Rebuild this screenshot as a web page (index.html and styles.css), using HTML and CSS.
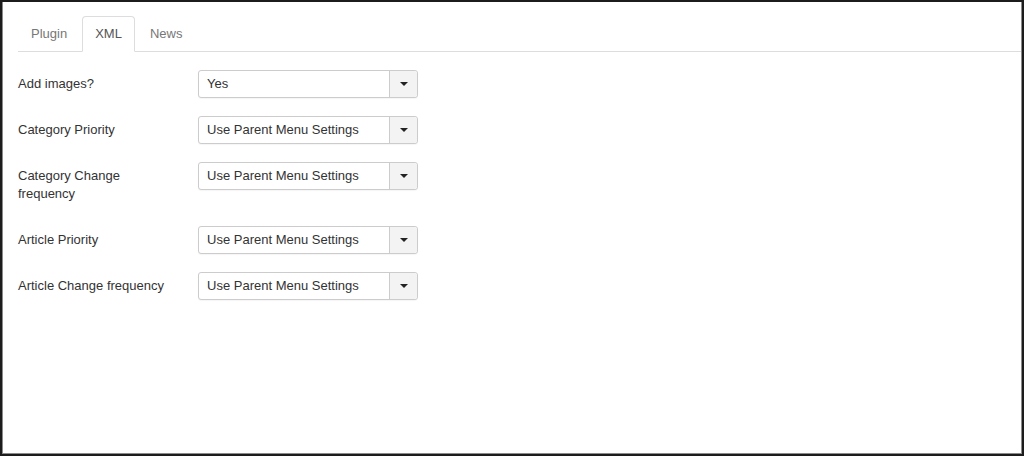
FILE: index.html
```html
<!DOCTYPE html>
<html>
<head>
<meta charset="utf-8">
<link rel="stylesheet" href="styles.css">
</head>
<body>
<div class="frame">
  <ul class="tabs">
    <li class="tab">Plugin</li>
    <li class="tab active">XML</li>
    <li class="tab">News</li>
  </ul>
  <div class="form">
    <div class="row">
      <div class="label">Add images?</div>
      <div class="select"><span class="value">Yes</span><span class="arrow"><i></i></span></div>
    </div>
    <div class="row">
      <div class="label">Category Priority</div>
      <div class="select"><span class="value">Use Parent Menu Settings</span><span class="arrow"><i></i></span></div>
    </div>
    <div class="row">
      <div class="label">Category Change frequency</div>
      <div class="select"><span class="value">Use Parent Menu Settings</span><span class="arrow"><i></i></span></div>
    </div>
    <div class="row">
      <div class="label">Article Priority</div>
      <div class="select"><span class="value">Use Parent Menu Settings</span><span class="arrow"><i></i></span></div>
    </div>
    <div class="row">
      <div class="label">Article Change frequency</div>
      <div class="select"><span class="value">Use Parent Menu Settings</span><span class="arrow"><i></i></span></div>
    </div>
  </div>
</div>
</body>
</html>
```

FILE: styles.css
```css
html, body {
  margin: 0;
  padding: 0;
  background: #ffffff;
}
.frame {
  box-sizing: border-box;
  width: 1024px;
  height: 456px;
  border: 2px solid #1c1c1c;
  box-shadow: inset 1px 0 0 #8a8a8a, inset -1px 0 0 #8a8a8a, inset 0 -1px 0 #8a8a8a;
  padding: 14px 1px 0 16px;
  font-family: "Liberation Sans", Arial, sans-serif;
  font-size: 13px;
  color: #333333;
}
.tabs {
  list-style: none;
  margin: 0;
  padding: 0;
  display: flex;
  border-bottom: 1px solid #dddddd;
}
.tab {
  padding: 8px 12px;
  line-height: 18px;
  margin-right: 2px;
  margin-bottom: -1px;
  border: 1px solid transparent;
  border-radius: 4px 4px 0 0;
  color: #777777;
}
.tab.active {
  color: #555555;
  background: #ffffff;
  border-color: #dddddd #dddddd transparent;
}
.form {
  margin-top: 18px;
  display: flex;
  flex-direction: column;
  gap: 18px;
}
.row {
  display: flex;
  align-items: flex-start;
}
.label {
  width: 160px;
  margin-right: 20px;
  padding: 5px 0;
  line-height: 18px;
}
.select {
  box-sizing: border-box;
  width: 220px;
  height: 28px;
  border: 1px solid #cccccc;
  border-radius: 3px;
  display: flex;
  align-items: stretch;
  background: #ffffff;
  box-shadow: 0 1px 1px rgba(0,0,0,0.04);
}
.value {
  flex: 1;
  padding-left: 8px;
  line-height: 26px;
  color: #333333;
  white-space: nowrap;
}
.arrow {
  width: 27px;
  border-left: 1px solid #cccccc;
  background: #f3f3f3;
  border-radius: 0 3px 3px 0;
  display: flex;
  align-items: center;
  justify-content: center;
}
.arrow i {
  display: block;
  width: 0;
  height: 0;
  border-left: 4px solid transparent;
  border-right: 4px solid transparent;
  border-top: 4px solid #222222;
  margin-top: 0;
}
```
